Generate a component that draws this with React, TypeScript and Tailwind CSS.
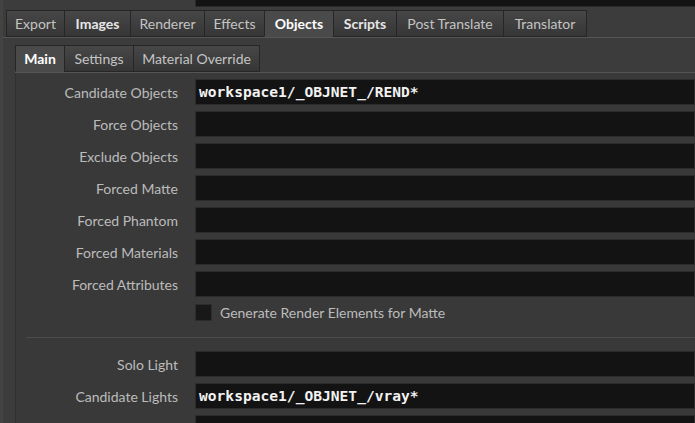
import React from 'react';

const topTabs = [
  { name: 'Export', w: 59 },
  { name: 'Images', w: 67, bold: true },
  { name: 'Renderer', w: 75 },
  { name: 'Effects', w: 61 },
  { name: 'Objects', w: 70, bold: true, active: true },
  { name: 'Scripts', w: 64, bold: true },
  { name: 'Post Translate', w: 108 },
  { name: 'Translator', w: 84 },
];

const subTabs = [
  { name: 'Main', w: 50, bold: true, active: true },
  { name: 'Settings', w: 70 },
  { name: 'Material Override', w: 127 },
];

const objectRows = [
  { label: 'Candidate Objects', value: 'workspace1/_OBJNET_/REND*' },
  { label: 'Force Objects' },
  { label: 'Exclude Objects' },
  { label: 'Forced Matte' },
  { label: 'Forced Phantom' },
  { label: 'Forced Materials' },
  { label: 'Forced Attributes' },
];

const lightRows = [
  { label: 'Solo Light' },
  { label: 'Candidate Lights', value: 'workspace1/_OBJNET_/vray*' },
  { label: '' },
];

type Tab = { name: string; w: number; bold?: boolean; active?: boolean };

const TabButton: React.FC<{ tab: Tab }> = ({ tab }) => (
  <div
    style={{ width: tab.w }}
    className={`h-[27px] shrink-0 flex items-center justify-center border border-[#262626] -ml-px first:ml-0 text-[14px] ${
      tab.active
        ? 'bg-[#4a4a4a] text-white border-b-[#4a4a4a]'
        : 'bg-gradient-to-b from-[#474747] to-[#363636]'
    } ${tab.bold ? 'font-bold text-[#e6e6e6]' : 'text-[#c4c4c4]'}`}
  >
    {tab.name}
  </div>
);

const FieldRow: React.FC<{ label: string; value?: string }> = ({ label, value }) => (
  <div className="flex items-center h-[26px] shrink-0">
    <div className="w-[162px] text-right text-[14px] text-[#bcbcbc]">{label}</div>
    <div className="ml-[17px] flex-1 h-[26px] bg-[#131313] border border-[#2c2c2c] flex items-center pl-[3px] font-['DejaVu_Sans_Mono',monospace] font-bold text-[14.6px] text-[#f2f2f2] whitespace-nowrap overflow-hidden">
      {value}
    </div>
  </div>
);

export default function App() {
  return (
    <div className="w-[695px] h-[423px] overflow-hidden bg-[#3c3c3c] font-['Lato',sans-serif] flex">
      <div className="w-[3px] bg-[#434343] shrink-0" />
      <div className="flex-1 flex flex-col">
        {/* dark field peeking from above */}
        <div className="flex h-[7px] shrink-0">
          <div className="w-[192px]" />
          <div className="flex-1 bg-[#131313] border-b border-l border-[#2a2a2a]" />
        </div>

        {/* top tabs */}
        <div className="flex shrink-0 pl-[3px] mt-[3px] border-b border-[#555555]">
          {topTabs.map((t) => (
            <TabButton key={t.name} tab={t} />
          ))}
        </div>

        {/* sub panel */}
        <div className="flex flex-col shrink-0 pl-[12px] pt-[7px]">
          <div className="flex shrink-0 border-b border-[#555555]">
            {subTabs.map((t) => (
              <TabButton key={t.name} tab={t} />
            ))}
          </div>
          <div className="bg-[#393939] border-l border-[#303030] pt-[6px] pb-[20px]">
            <div className="flex flex-col gap-[6px]">
              {objectRows.map((r) => (
                <FieldRow key={r.label} label={r.label} value={r.value} />
              ))}
            </div>
            <div className="flex items-center h-[17px] mt-[7px] pl-[179px]">
              <div className="w-[17px] h-[17px] bg-[#181818] border border-[#2c2c2c]" />
              <span className="ml-[8px] text-[14px] text-[#bcbcbc]">Generate Render Elements for Matte</span>
            </div>
            <div className="ml-[10px] mt-[16px] border-t border-[#4c4c4c]" />
            <div className="flex flex-col gap-[6px] mt-[13px]">
              {lightRows.map((r, i) => (
                <FieldRow key={i} label={r.label} value={r.value} />
              ))}
            </div>
          </div>
        </div>
      </div>
    </div>
  );
}
